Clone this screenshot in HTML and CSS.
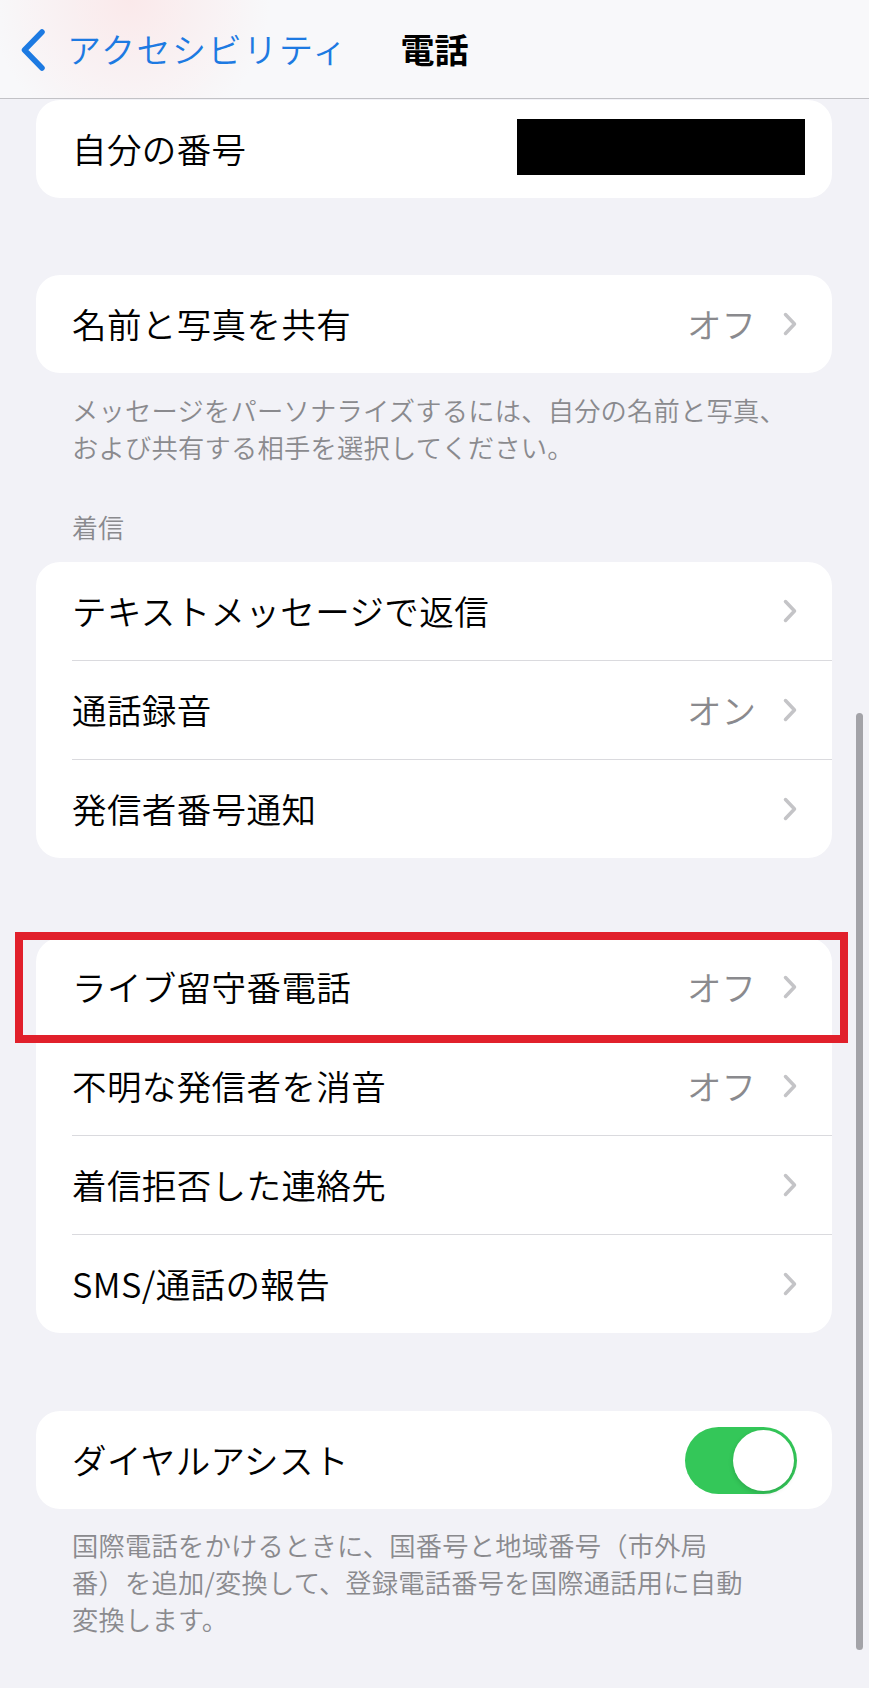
FILE: index.html
```html
<!DOCTYPE html>
<html lang="ja">
  <head>
    <meta charset="utf-8" />
    <meta name="viewport" content="width=device-width,initial-scale=1" />
    <title>電話</title>
    <link rel="stylesheet" href="styles.css">
  </head>
  <body>
    <!-- ナビゲーションバー -->
    <header class="nav">
      <a class="nav-back" href="#">
        <svg class="nav-chevron" width="24" height="42" viewBox="0 0 24 42">
          <path d="M21 3 L3.5 21 L21 39" fill="none" stroke="currentColor" stroke-width="5.5" stroke-linecap="round" stroke-linejoin="round" />
        </svg>
        <span>アクセシビリティ</span>
      </a>
      <h1 class="nav-title">電話</h1>
      <div></div>
    </header>

    <main class="content">
      <div class="card card-first">
        <div class="row">
          <span class="row-label">自分の番号</span>
          <span class="redacted"></span>
        </div>
      </div>

      <div class="card card-share">
        <div class="row">
          <span class="row-label">名前と写真を共有</span>
          <span class="row-value">オフ</span>
          <svg class="row-chevron" width="14" height="24" viewBox="0 0 14 24"><path d="M2.5 2.5 L11.5 12 L2.5 21.5" /></svg>
        </div>
      </div>
      <p class="footnote">メッセージをパーソナライズするには、自分の名前と写真、<br>および共有する相手を選択してください。</p>

      <!-- 着信 -->
      <h2 class="section-title">着信</h2>
      <div class="card">
        <div class="row">
          <span class="row-label">テキストメッセージで返信</span>
          <svg class="row-chevron" width="14" height="24" viewBox="0 0 14 24"><path d="M2.5 2.5 L11.5 12 L2.5 21.5" /></svg>
        </div>
        <div class="row">
          <span class="row-label">通話録音</span>
          <span class="row-value">オン</span>
          <svg class="row-chevron" width="14" height="24" viewBox="0 0 14 24"><path d="M2.5 2.5 L11.5 12 L2.5 21.5" /></svg>
        </div>
        <div class="row">
          <span class="row-label">発信者番号通知</span>
          <svg class="row-chevron" width="14" height="24" viewBox="0 0 14 24"><path d="M2.5 2.5 L11.5 12 L2.5 21.5" /></svg>
        </div>
      </div>

      <div class="card card-group">
        <div class="highlight"></div>
        <div class="row">
          <span class="row-label">ライブ留守番電話</span>
          <span class="row-value">オフ</span>
          <svg class="row-chevron" width="14" height="24" viewBox="0 0 14 24"><path d="M2.5 2.5 L11.5 12 L2.5 21.5" /></svg>
        </div>
        <div class="row">
          <span class="row-label">不明な発信者を消音</span>
          <span class="row-value">オフ</span>
          <svg class="row-chevron" width="14" height="24" viewBox="0 0 14 24"><path d="M2.5 2.5 L11.5 12 L2.5 21.5" /></svg>
        </div>
        <div class="row">
          <span class="row-label">着信拒否した連絡先</span>
          <svg class="row-chevron" width="14" height="24" viewBox="0 0 14 24"><path d="M2.5 2.5 L11.5 12 L2.5 21.5" /></svg>
        </div>
        <div class="row">
          <span class="row-label">SMS/通話の報告</span>
          <svg class="row-chevron" width="14" height="24" viewBox="0 0 14 24"><path d="M2.5 2.5 L11.5 12 L2.5 21.5" /></svg>
        </div>
      </div>

      <div class="card card-dial">
        <div class="row">
          <span class="row-label">ダイヤルアシスト</span>
          <span class="toggle"><span class="toggle-knob"></span></span>
        </div>
      </div>
      <p class="footnote">国際電話をかけるときに、国番号と地域番号（市外局<br>番）を追加/変換して、登録電話番号を国際通話用に自動<br>変換します。</p>
    </main>

    <div class="scrollbar"></div>
  </body>
</html>
```

FILE: styles.css
```css
* {
  box-sizing: border-box;
}
html,
body {
  margin: 0;
  padding: 0;
}
body {
  position: relative;
  width: 869px;
  min-height: 1688px;
  background-color: #f2f2f7;
  font-family: "Noto Sans CJK JP", "Noto Sans", sans-serif;
  color: #000;
  overflow: hidden;
}

/* ナビゲーションバー */
.nav {
  display: grid;
  grid-template-columns: 1fr auto 1fr;
  align-items: center;
  height: 99px;
  background-color: #f8f8fa;
  background-image: radial-gradient(circle at 130px 0, rgba(255, 205, 205, 0.35), rgba(255, 205, 205, 0) 140px);
  border-bottom: 1px solid #c2c2c6;
}
.nav-back {
  display: flex;
  align-items: center;
  gap: 22px;
  padding-left: 21px;
  color: #1d7ae2;
  text-decoration: none;
  font-size: 34px;
  font-weight: 350;
  line-height: 1.2;
  letter-spacing: 1.6px;
}
.nav-chevron {
  display: block;
  margin-top: 2px;
}
.nav-title {
  margin: 0;
  font-size: 34px;
  font-weight: 700;
  line-height: 1.2;
}

.content {
  padding: 1px 37px 0 36px;
}

/* カード */
.card {
  position: relative;
  background-color: #fff;
  border-radius: 24px;
}
.card-share {
  margin-top: 77px;
}
.card-group {
  margin-top: 80px;
}
.card-dial {
  margin-top: 78px;
}
.row {
  display: flex;
  align-items: center;
  height: 98px;
  margin-left: 36px;
  padding-right: 35px;
}
.row + .row {
  height: 99px;
  border-top: 1px solid #dadade;
}
.row-label {
  flex: 1;
  font-size: 34.5px;
  font-weight: 350;
  line-height: 1.2;
  letter-spacing: 0.4px;
  white-space: nowrap;
}
.row-value {
  font-size: 34.5px;
  font-weight: 350;
  line-height: 1.2;
  color: #8a8a8e;
  margin-right: 27px;
}
.row-chevron {
  display: block;
  flex-shrink: 0;
}
.row-chevron path {
  fill: none;
  stroke: #c4c4c7;
  stroke-width: 3.5;
  stroke-linecap: round;
  stroke-linejoin: round;
}
.redacted {
  width: 288px;
  height: 56px;
  margin-right: -8px;
  margin-top: -4px;
  background-color: #000;
}

/* 注釈テキスト */
.footnote {
  margin: 18px 0 0;
  padding-left: 36px;
  font-size: 26.3px;
  font-weight: 350;
  line-height: 37px;
  letter-spacing: 0.2px;
  color: #8a8a8e;
  white-space: nowrap;
}
.card-dial + .footnote {
  margin-top: 17px;
}
.section-title {
  margin: 43px 0 17px;
  padding-left: 36px;
  font-size: 26px;
  font-weight: 350;
  line-height: 37px;
  color: #8a8a8e;
}

/* スイッチ */
.toggle {
  display: flex;
  justify-content: flex-end;
  align-items: center;
  width: 112px;
  height: 67px;
  padding: 3px;
  border-radius: 34px;
  background-color: #34c759;
}
.toggle-knob {
  width: 61px;
  height: 61px;
  border-radius: 50%;
  background-color: #fff;
  box-shadow: 0 2px 5px rgba(0, 0, 0, 0.15);
}

/* 赤枠の強調表示 */
.highlight {
  position: absolute;
  top: -6px;
  left: -21px;
  right: -16px;
  height: 111px;
  border: 8px solid #e1202b;
  pointer-events: none;
  z-index: 2;
}

.scrollbar {
  position: absolute;
  top: 713px;
  left: 856px;
  width: 7px;
  height: 937px;
  border-radius: 4px;
  background-color: #a3a3a8;
}
```
